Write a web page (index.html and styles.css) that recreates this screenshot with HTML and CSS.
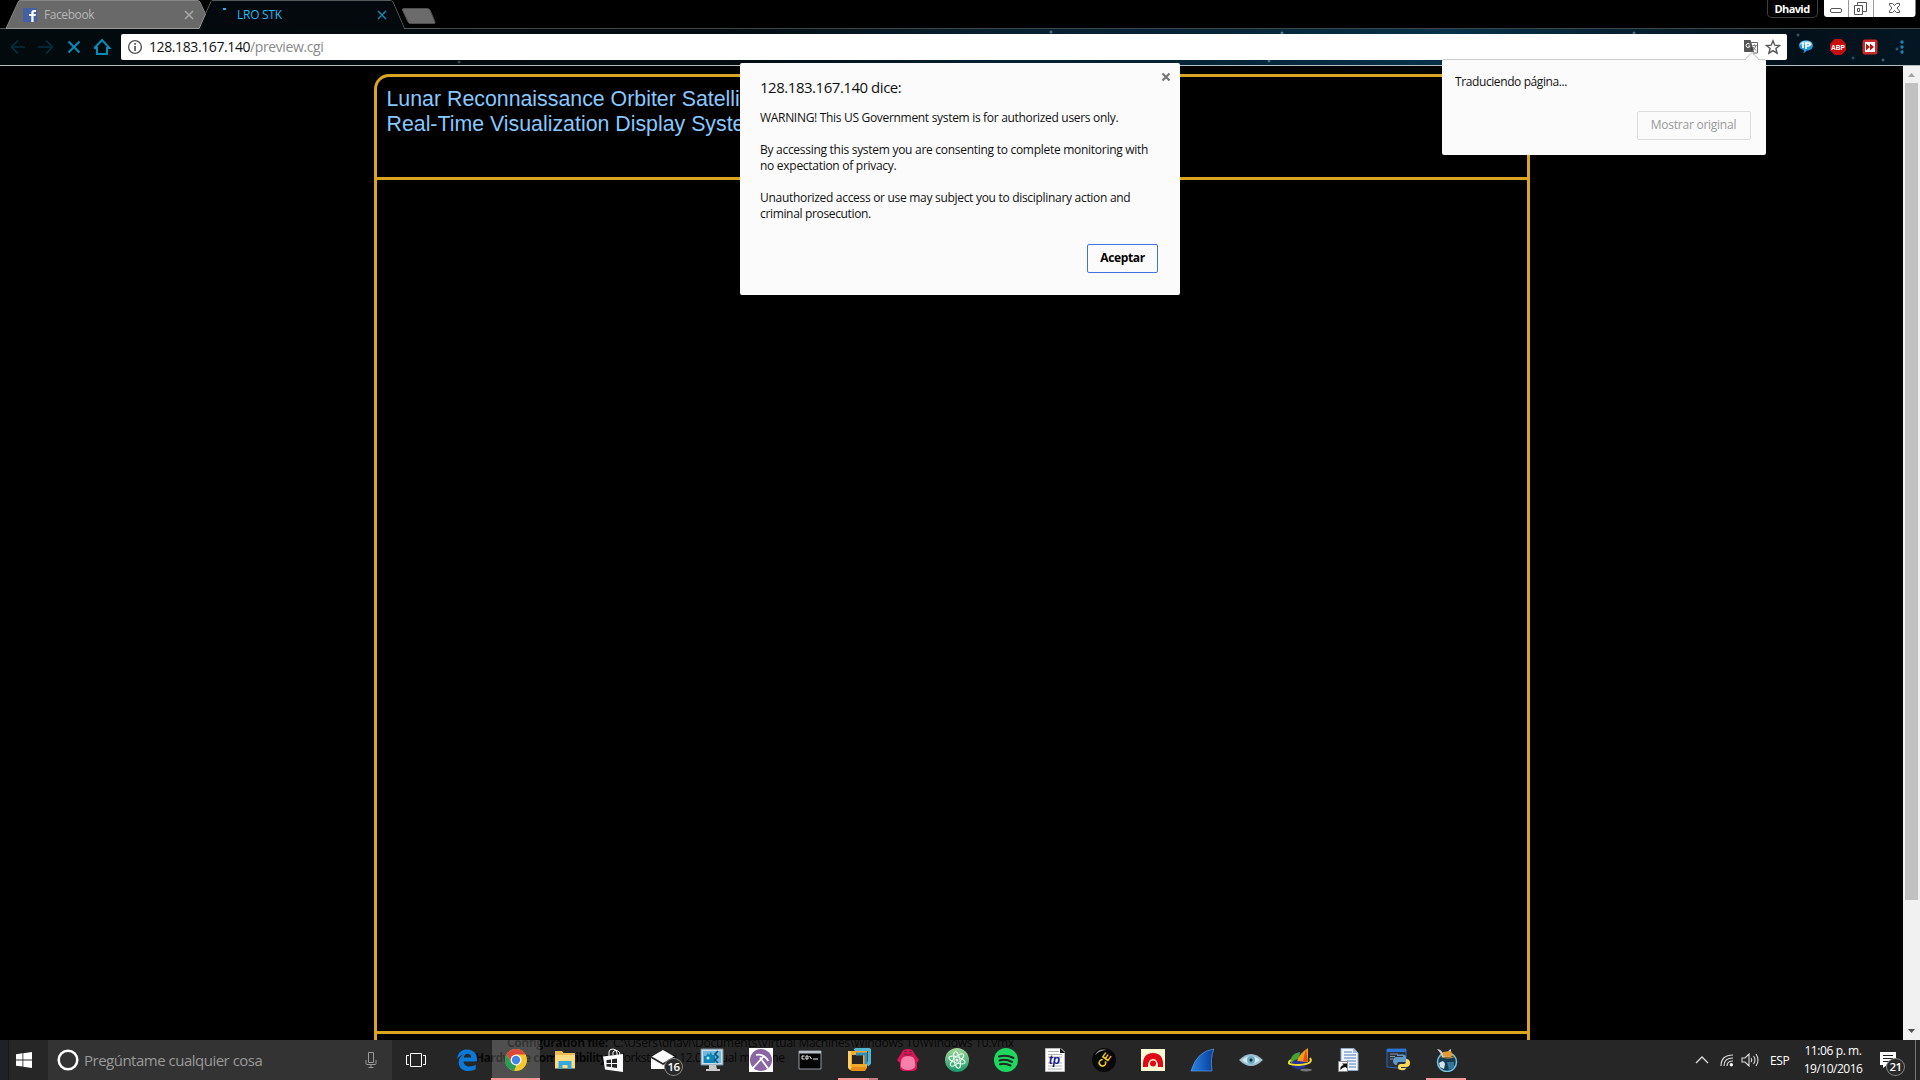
FILE: index.html
```html
<!DOCTYPE html>
<html lang="es">
<head>
<meta charset="utf-8">
<title>LRO STK</title>
<link rel="stylesheet" href="styles.css">
</head>
<body>
<div class="screen">
  <header class="tabstrip">
    <svg class="tabshapes" width="440" height="29" viewBox="0 0 440 29">
      <path d="M6 28.5 18.500 1.500Q19 .5 20 .5H197Q199 .5 200 2L205.500 14 199 28.500Z" fill="#696969"/>
      <path d="M6 28.500 18.500 1.500Q19 .5 20 .5H197Q199 .5 200 2L205.500 14" fill="none" stroke="#858585"/>
      <path d="M0 28.500H199L211 1.500Q211.500 .5 213 .5H390Q392 .5 393 2L404.500 28.500H440" fill="none" stroke="#555a5a"/>
      <path d="M6 28.500H199L205.500 14" fill="none" stroke="#999"/>
      <path d="M200 29 212 1.500 213 1H390.500L392 2 404 29Z" fill="#03090d"/>
      <path d="M403.500 8.500H427Q429 8.500 430 10L435 22Q435.500 23.500 434 23.500H410.500Q409 23.500 408 22L402.500 10Q402 8.500 403.500 8.500Z" fill="#6b6b6b" stroke="#505050"/>
    </svg>
    <div class="tab tab-facebook">
      <svg width="14" height="14" viewBox="0 0 14 14"><path fill="#4460a0" d="M0 0h14v14H0z"/><path d="M8.300 14V8H6V6h2.300V4.600Q8.300 2 11 2h2v2h-1.400q-1 0-1 1v1h2.300l-.3 2h-2v6" fill="#fff"/></svg>
      <span class="tab-name">Facebook</span>
      <svg class="tab-close" width="10" height="10" viewBox="0 0 10 10"><path d="m1 1 8 8M9 1 1 9"/></svg>
    </div>
    <div class="tab tab-active">
      <svg width="14" height="14" viewBox="0 0 14 14"><path fill="#1db4ee" d="M3 0h3v2H3z"/></svg>
      <span class="tab-name">LRO STK</span>
      <svg class="tab-close" width="10" height="10" viewBox="0 0 10 10"><path d="m1 1 8 8M9 1 1 9"/></svg>
    </div>
    <div class="profile">Dhavid</div>
    <svg class="winbuttons" width="92" height="17" viewBox="0 0 92 17">
      <path d="M0 0h91.500v14q0 3-3 3H3q-3 0-3-3z" fill="#fff"/><path d="M24.500 0v17M49.500 0v17" stroke="#999"/>
      <g fill="#fff" stroke="#555"><rect x="6.500" y="8.500" width="11" height="4" rx="1.500"/><path d="M33.500 2.500h9v9h-9z"/><path d="M30.500 5.500h8v9h-8z"/><path d="M33.500 8.500h2v3h-2z"/><path d="M65.500 3.500h3l2 2 2-2h3v2L73 8l2.500 3v1.500h-3l-2-2-2 2h-3V11L68 8l-2.500-3z"/></g>
    </svg>
  </header>

  <nav class="toolbar">
    <div class="navicons">
      <svg width="16" height="18" viewBox="0 0 16 18" class="dim"><path d="M15 9H2m6-6.500L1.500 9 8 15.500"/></svg>
      <svg width="16" height="18" viewBox="0 0 16 18" class="dim"><path d="M0 9h13M8 2.500 14.500 9 8 15.500"/></svg>
      <svg width="16" height="18" viewBox="0 0 16 18" class="lit"><path d="m2.500 3.500 11 11m0-11-11 11"/></svg>
      <svg width="18" height="18" viewBox="1 0 18 18" class="lit"><path d="M1.500 10 9 2l7.500 8H14v6H4v-6z"/></svg>
    </div>
    <div class="omnibox">
      <svg width="16" height="16" viewBox="0 0 16 16"><circle cx="8" cy="8" r="6.400" fill="none" stroke="#555" stroke-width="1.400"/><path d="M7.200 4h1.700v1.700H7.200zM7.200 7h1.700v5H7.200z" fill="#555"/></svg>
      <span class="url">128.183.167.140<span class="path">/preview.cgi</span></span>
      <svg class="translate" width="16" height="16" viewBox="0 0 16 16"><path d="M1 1h6.500l1 3L11 13H1.500Q1 13 1 12z" fill="#555"/><path d="M7 3.500h7.500v10.500H10" fill="none" stroke="#666"/><path d="M6.700 5.200Q5 3.700 3.700 5t0 3q1.500 1.200 3-.2V7H5.200" fill="none" stroke="#fff"/><path d="m8 7 2.500 2.500L8 12z" fill="#444"/><path d="M9.500 6.500h4m-2-1v1m1.500 0q-1 3-3 4.500m0-3 3 3.500" fill="none" stroke="#777"/></svg>
      <svg width="16" height="16" viewBox="0 0 16 16"><path d="m8 1.800 1.800 4.400 4.700.3-3.600 3 1.200 4.700L8 11.600l-4.100 2.600 1.200-4.700-3.600-3 4.700-.3z" fill="none" stroke="#555" stroke-width="1.400"/></svg>
    </div>
    <div class="extensions">
      <svg width="16" height="16" viewBox="0 0 16 16"><path d="M8 1.500c4 0 7 2 7 5s-3 5-6 5l-3.500 3 .5-3.500c-3-.4-5-2-5-4.500 0-3 3-5 7-5z" fill="#2499dc"/><path d="M8 1.800c3.500 0 6 1.500 6.500 4H1.500c.5-2.500 3-4 6.500-4z" fill="#84cdf3"/><path d="M5 3.500V9m3 1V4h2.500q1.500.2 1.500 1.500T10.500 7H8" stroke="#fff" stroke-width="1.700" fill="none"/></svg>
      <svg width="16" height="16" viewBox="0 0 16 16"><path d="M4.700 0h6.600L16 4.700v6.600L11.300 16H4.700L0 11.300V4.700z" fill="#c70d0d"/><text x="8" y="10.700" text-anchor="middle" class="abp">ABP</text></svg>
      <svg width="16" height="16" viewBox="0 0 16 16"><rect x=".5" y=".5" width="15" height="15" rx="2.500" fill="#c92a2a"/><path d="M3 3h10v10H3z" fill="#fff"/><path d="M4 4.500 8 8l-4 3.500zM8 4.500 12 8l-4 3.500z" fill="#a51818"/></svg>
      <svg width="16" height="16" viewBox="0 0 16 16" fill="#1687b5"><circle cx="8" cy="3" r="1.700"/><circle cx="8" cy="8" r="1.700"/><circle cx="8" cy="13" r="1.700"/></svg>
    </div>
  </nav>

  <main class="viewport">
    <section class="frame">
      <div class="banner">Lunar Reconnaissance Orbiter Satellite<br>Real-Time Visualization Display System</div>
      <div class="display"></div>
    </section>
    <div class="scrollbar">
      <svg width="17" height="17" viewBox="0 0 17 17"><path d="m8.500 7 3.500 4H5z" fill="#a3a3a3"/></svg>
      <div class="thumb"></div>
      <svg class="down" width="17" height="17" viewBox="0 0 17 17"><path d="M5 6h7l-3.500 4z" fill="#505050"/></svg>
    </div>
  </main>

  <footer class="taskbar">
    <div class="ghost">
      <div class="ghost-row"><b class="g1">Configuration file:</b><span class="g2">C:\Users\dhavi\Documents\Virtual Machines\Windows 10\Windows 10.vmx</span></div>
      <div class="ghost-row"><b class="g3">Hardware compatibility:</b><span class="g4">Workstation 12.0 virtual machine</span></div>
    </div>
    <div class="start"><svg width="16" height="16" viewBox="0 0 16 16" fill="#fff"><path d="M0 2.300 6.500 1.300V7.500H0zM7.300 1.200 16 0v7.500H7.300zM0 8.400h6.500v6.200L0 13.700zM7.300 8.400H16V16l-8.700-1.200z"/></svg></div>
    <div class="cortana">
      <svg width="24" height="24" viewBox="0 0 24 24"><circle cx="12" cy="12" r="9.300" fill="none" stroke="#fff" stroke-width="2.500"/></svg>
      <span class="ask">Pregúntame cualquier cosa</span>
      <svg width="12" height="18" viewBox="0 0 12 18" fill="none" stroke="#999"><path d="M3.500 1.500h5v10h-5zM1 9v3.500q0 1 1 1h8q1 0 1-1V9M6 13.500v3M3.500 16.500h5"/></svg>
    </div>
    <div class="taskview"><svg width="22" height="16" viewBox="0 0 22 16" fill="none" stroke="#fff"><path d="M5.500 1.500h11v13h-11zM4 3.500H1.500v9H4M18 3.500h2.500v9H18"/></svg></div>
    <div class="apps">
      <div class="app"><svg viewBox="0 0 24 24"><path d="M2 11C3 4 7 1.500 12 1.500c6.500 0 10 4.500 10 9v3H8.500c.3 3.500 3 5 6.200 5 2.300 0 4.300-.7 6-1.700v4.500c-2 1.100-4.500 1.700-7 1.700-6 0-10-3.500-10-8.600 0-3.500 1.800-6.400 5-8C5 7.500 3 9 2 11zm6.700-1.500h7.500c0-2.400-1.400-3.800-3.500-3.800s-3.500 1.400-4 3.800z" fill="#0b79d7"/></svg></div>
      <div class="app current"><svg viewBox="0 0 24 24"><circle cx="12" cy="12" r="11" fill="#f6c72d"/><path d="M2.500 6.500A11 11 0 0 1 21.500 6.500H12L7 14z" fill="#dc473c"/><path d="M2.500 6.500 7.500 15l5 2-2.500 6A11 11 0 0 1 2.500 6.500z" fill="#2a9c58"/><circle cx="12" cy="12" r="5.400" fill="#fff"/><circle cx="12" cy="12" r="4.200" fill="#4285e8"/></svg></div>
      <div class="app"><svg viewBox="0 0 24 24"><path d="M2 3h7l1.500 2H22v15H2z" fill="#e9bd50"/><path d="M2 7h20v13.500H2z" fill="#fbdc82"/><path d="M5.500 21v-8h13v8h-4v-4h-5v4z" fill="#35a9df"/></svg></div>
      <div class="app"><svg viewBox="0 0 24 24"><path d="M1 8.500 21 6v18L3 21.500z" fill="#fff"/><path d="M7 8V4q0-3 4-3 3.500 0 4 4v2M11 7V4q2-3 5-1 2 1 2 4" fill="none" stroke="#fff"/><path d="m4.500 12 4.500-.6V15H4.500zm5.500-.8 5-.6V15h-5zM4.500 16H9v3l-4.500-.5zm5.500 0h5v4l-5-.7z" fill="#252525"/></svg></div>
      <div class="app mail"><svg viewBox="0 0 24 24"><path d="m0 9 12-7 12 7v12H0z" fill="#fff"/><path d="m0 9 12 7 12-7" fill="none" stroke="#242424" stroke-width="1.700"/></svg><span class="badge">16</span></div>
      <div class="app"><svg viewBox="0 0 24 24"><path d="M1 1h22v16H1z" fill="#cbdde8" stroke="#778c98"/><path d="M3 3h18v12H3z" fill="#6fb9da"/><path d="M4 8h2l2-3 1 2 2-3 1 3h3v8H4z" fill="#0e83b8"/><circle cx="8" cy="10" r="1.500" fill="#bdeefa"/><path d="m18 3-3 3 3 3-3 3 3 3" stroke="#07507a" stroke-width="1.600" fill="none"/><path d="M9 17h7l1 4h3v2H6v-2h3z" fill="#c9c9c9"/></svg></div>
      <div class="app"><svg viewBox="0 0 24 24"><path d="M0 0h24v24H0z" fill="#fff"/><circle cx="12" cy="12" r="11" fill="#8b66a5"/><path d="m3.500 20.500 12-13M7 7q7-2 12.500 6M11 9.500l8 11" stroke="#fff" stroke-width="1.800" fill="none"/></svg></div>
      <div class="app"><svg viewBox="0 0 24 24"><path d="M1 3h22v18H1z" fill="#050505" stroke="#909aa5"/><path d="M1 3h22v2.500H1z" fill="#b8c1ca"/><path d="M6.500 8H4v3h2.500M8 8h2v3H8zM11.500 8l2 3M15 11h5" stroke="#eee" fill="none"/></svg></div>
      <div class="app running stacked"><svg viewBox="0 0 24 24"><path d="M8 3 10 1h11l2 2v11l-3 3" fill="none" stroke="#55b3d2" stroke-width="4"/><path d="M3 5h15v13H3z" fill="none" stroke="#f4a82c" stroke-width="4"/><path d="M1 3h3v15l2 4H3l-2-2z" fill="#ffce64"/><path d="m3 22 2-3h13l2 1-2 3H5z" fill="#e78e1b"/><path d="M9 6h10v10" fill="none" stroke="#398fb2" stroke-width="3"/><path d="M9 10h5v5H9z" fill="#252525"/></svg></div>
      <div class="app"><svg viewBox="0 0 24 24"><path d="M6 4q1-3 6-3 5 0 6 4l5 7-2 3v6l-3 2H7l-3-2v-6l-3-3z" fill="#d71557"/><path d="M5 14q0-6 7-6t7 6q2 8-7 8t-7-8z" fill="#f77fa9"/><path d="M8 3.500h3m2 0h3M8 6q4 2 8 0" stroke="#752040" fill="none"/></svg></div>
      <div class="app"><svg viewBox="0 0 24 24"><defs><linearGradient id="atom" x2="0" y2="1"><stop stop-color="#a6d799"/><stop offset="1" stop-color="#18986e"/></linearGradient></defs><circle cx="12" cy="12" r="12" fill="url(#atom)"/><g fill="none" stroke="#edfff3"><ellipse cx="12" cy="12" rx="3" ry="8.500" transform="rotate(-12 12 12)"/><ellipse cx="12" cy="12" rx="3" ry="8.500" transform="rotate(48 12 12)"/><ellipse cx="12" cy="12" rx="3" ry="8.500" transform="rotate(108 12 12)"/></g><circle cx="12" cy="12" r="1.500" fill="#fff"/></svg></div>
      <div class="app"><svg viewBox="0 0 24 24"><circle cx="12" cy="12" r="12" fill="#1ed760"/><path d="M5 8.500q7.500-2.200 14.500 1.500M5.500 12.500q6.500-1.800 12.500 1.500M6 16.200q5.500-1.200 10.500 1.300" stroke="#202820" stroke-width="2" stroke-linecap="round" fill="none"/></svg></div>
      <div class="app"><svg viewBox="0 0 24 24"><path d="M2.500 .5H18L21.500 4v19.500h-19z" fill="#fff" stroke="#bbb"/><path d="M5 3.500h11M5 6.500h14M5 9h14M5 15h14M5 18h14M5 21h14" stroke="#b0b0b0"/><path d="M17 0v5h5" fill="#111"/><text x="11.500" y="15.500" text-anchor="middle" class="tp">tp</text></svg></div>
      <div class="app"><svg viewBox="0 0 24 24"><circle cx="12" cy="12" r="12" fill="#080808"/><path d="M3 7Q7 0 15 2q-7 0-12 5z" fill="#aaa"/><text x="12" y="16" text-anchor="middle" class="ce" transform="rotate(-55 12 12)">CE</text></svg></div>
      <div class="app"><svg viewBox="0 0 24 24"><path d="M0 1h24v22H0z" fill="#fff9d4"/><path d="M2 19q-1-14 10-14t10 14h-5q0-8-5-8t-5 8z" fill="#df0814"/><circle cx="12" cy="15.500" r="3" fill="#df0814"/></svg></div>
      <div class="app"><svg viewBox="0 0 24 24"><defs><linearGradient id="fin" x2="1"><stop stop-color="#2b83df"/><stop offset="1" stop-color="#073c9c"/></linearGradient></defs><path d="M1 23Q7 3 24 1q-4 8-2 22z" fill="url(#fin)" stroke="#5aa0e5" stroke-width=".7"/></svg></div>
      <div class="app"><svg viewBox="0 0 24 24"><path d="M0 12q6-6 12-6t12 6q-6 6-12 6T0 12z" fill="#9cbfcf"/><path d="M3 12q5-4 9-4t9 4q-5 4-9 4t-9-4z" fill="#d4eaf2"/><circle cx="12" cy="12" r="4" fill="#6eabc2"/><circle cx="12" cy="12" r="1.500" fill="#122733"/></svg></div>
      <div class="app"><svg viewBox="0 0 24 24"><ellipse cx="18" cy="22" rx="6" ry="1.500" fill="#777"/><circle cx="11" cy="13" r="8.500" fill="#24329a"/><path d="M3 16Q1 6 12 4l-1 7q-5 0-8 5z" fill="#46a52c"/><path d="M3 12q-7 5 8 5 15-1 11-7" stroke="#f5df25" stroke-width="2" fill="none"/><path d="M9 13Q12 5 20 0v14z" fill="#f79c16"/><path d="m18 1 2 13-5-1z" fill="#e94b17"/></svg></div>
      <div class="app"><svg viewBox="0 0 24 24"><path d="M4 .5h13L21 5v17.500H4z" fill="#eff5ff" stroke="#91a7c7"/><path d="M16 0v5h5" fill="#9ebee5"/><path d="M7 4h8M7 7h12M7 10h12M10 13h9M12 16h7M12 19h7" stroke="#537bb6"/><path d="M1.500 13.500h9v10h-9z" fill="#fff" stroke="#888"/><path d="M3.500 22q-1-4 3-5l-1.500-1.500H10v5l-1.500-1.500Q6 19 3.500 22z" fill="#111"/></svg></div>
      <div class="app"><svg viewBox="0 0 24 24"><path d="M1 1h19v20L1 19z" fill="#28313a" stroke="#2b66b5"/><path d="M1 1h19v3H1z" fill="#2e73d6"/><path d="M4 6h8M4 8.500h5M4 11h3" stroke="#8b98a5"/><path d="M11 6.500h6q3 0 3 3V14h-7q-2 0-2 3-4 0-4-4t4-4h6V8h-6z" fill="#6098c7"/><path d="M20 11q4 0 4 4t-4 4h-5v1h5q-1 3-5 2-3 0-3-3 0-3 3-3h3q2 0 2-2z" fill="#ffdb55"/></svg></div>
      <div class="app running"><svg viewBox="0 0 24 24"><circle cx="12" cy="14" r="9.500" fill="#173b53" stroke="#78c6e8" stroke-width="1.500"/><path d="M2 1q5 0 7 7l3-1q1-5 4-6v8H7Q6 5 2 1z" fill="#cbd1d3"/><path d="m8 4 8-1 2 5q-5 2-10 0zM3 8q9 3 18 0-7 5-18 0z" fill="#e39a31"/><path d="M4 15q5-4 6 1l-1 5-4-2z" fill="#d8e3e9"/><path d="M12 14h7v6l-5 2z" fill="#347593"/></svg></div>
    </div>
    <div class="tray">
      <svg class="t-up" width="14" height="10" viewBox="0 0 14 10"><path d="m1 8 6-6 6 6" fill="none" stroke="#ddd" stroke-width="1.300"/></svg>
      <svg class="t-net" width="14" height="14" viewBox="0 0 14 14"><g fill="none" stroke="#ddd"><path d="M1 13Q1 2 13 2M4 13q0-8 9-8M7 13q0-5 6-5" stroke-width="1.200"/></g><circle cx="11.300" cy="11.700" r="1.700" fill="#fff"/></svg>
      <svg class="t-vol" width="18" height="14" viewBox="0 0 18 14"><path d="M1 5h3l4-4v12L4 9H1zM10 5q1.500 2 0 4M12.500 3q3 4 0 8M15 1q4 6 0 12" fill="none" stroke="#ddd" stroke-width="1.100"/></svg>
      <span class="lang">ESP</span>
      <div class="clock"><span class="time">11:06 p. m.</span><span class="date">19/10/2016</span></div>
      <div class="notes"><svg width="18" height="18" viewBox="0 0 18 18"><path d="M1 1h16v13H8l-4 3v-3H1z" fill="#fff"/><path d="M4 4.500h10M4 7.500h10M4 10.500h7" stroke="#222"/></svg><span class="badge">21</span></div>
    </div>
  </footer>

  <div class="dialog" role="dialog">
    <div class="dialog-title">128.183.167.140 dice:</div>
    <p class="m1">WARNING! This US Government system is for authorized users only.</p>
    <p><span class="m2">By accessing this system you are consenting to complete monitoring with</span><br><span class="m3">no expectation of privacy.</span></p>
    <p><span class="m4">Unauthorized access or use may subject you to disciplinary action and</span><br><span class="m5">criminal prosecution.</span></p>
    <button class="accept">Aceptar</button>
    <svg class="dialog-close" width="10" height="10" viewBox="0 0 10 10"><path d="m1.500 1.500 7 7m0-7-7 7" stroke="#777" stroke-width="2.200"/></svg>
  </div>

  <div class="popup">
    <svg class="popup-arrow" width="14" height="8" viewBox="0 0 14 8"><path d="m1 7 6-6 6 6v1H1z" fill="#fbfbfb"/><path d="m0 7.500 7-7 7 7" fill="none" stroke="#bbb"/></svg>
    <div class="popup-text">Traduciendo página...</div>
    <button class="original">Mostrar original</button>
  </div>
</div>
</body>
</html>
```
FILE: styles.css
```css
* { box-sizing: border-box; }
html, body { margin: 0; background: #000; overflow: hidden; }
body { font-family: "Open Sans", "Noto Sans", sans-serif; font-size: 12px; color: #111; }
button { font-family: inherit; padding: 0; }
p { margin: 0; }
svg { display: block; flex: none; }
span, b { white-space: nowrap; }
.screen { position: relative; width: 1920px; height: 1080px; display: flex; flex-direction: column; }

.tabstrip { position: relative; height: 29px; display: flex; align-items: flex-start; border-bottom: 1px solid #404545; background: #000; }
.tabshapes { position: absolute; left: 0; top: 0; }
.tab { position: relative; display: flex; align-items: center; height: 29px; }
.tab-facebook { width: 197px; padding-left: 23px; color: #b5b5b5; }
.tab-active { width: 193px; padding-left: 23px; color: #20bcf2; }
.tab-name { margin-left: 7px; flex: 1; line-height: 16px; letter-spacing: -.42px; }
.tab-active .tab-name { margin-left: 3px; letter-spacing: -.25px; }
.tab-close { margin-right: 3px; fill: none; stroke: #aaa; stroke-width: 1.5; }
.tab-active .tab-close { stroke: #1687ad; }
.profile { margin-left: auto; width: 51px; height: 18px; border: 1px solid #404040; border-top: 0; border-radius: 0 0 5px 5px; color: #fff; font-size: 11px; font-weight: 700; line-height: 17px; text-align: center; letter-spacing: -.6px; padding-right: 1px; }
.winbuttons { margin: 0 4px 0 6px; }

.toolbar { height: 37px; display: flex; align-items: flex-start; padding-top: 5px; border-bottom: 1px solid #b5bcbc;
  background:
    radial-gradient(circle at 1634px 4px, #75899b 0, transparent 2px),
    radial-gradient(circle at 1798px 6px, #52718a 0, transparent 2px),
    radial-gradient(circle at 1853px 29px, #46657c 0, transparent 2px),
    radial-gradient(circle at 1883px 31px, #65808f 0, transparent 2px),
    radial-gradient(circle at 1897px 20px, #58758a 0, transparent 2px),
    radial-gradient(circle at 1051px 3px, #7699aa 0, transparent 2px),
    radial-gradient(circle at 1282px 4px, #80a8bd 0, transparent 2px),
    radial-gradient(circle at 1269px 32px, #6595b0 0, transparent 2px),
    radial-gradient(circle at 459px 33px, #50616c 0, transparent 2px),
    linear-gradient(90deg, #030a0d 0, #020b10 720px, #06202f 980px, #052538 1230px, #063149 1450px, #051f2e 1650px, #031019 1800px, #031723 1920px); }
.navicons { display: flex; gap: 12px; width: 121px; padding: 4px 0 0 10px; }
.navicons svg { fill: none; stroke-width: 1.7; }
.navicons .dim { stroke: #05303f; }
.navicons .lit { stroke: #078cb9; stroke-width: 2; }
.omnibox { width: 1666px; height: 26px; background: #fff; border-radius: 2px; display: flex; align-items: center; padding: 0 6px; }
.url { flex: 1; margin-left: 6px; font-size: 14px; line-height: 20px; letter-spacing: -.4px; }
.path { color: #888; }
.translate { margin-right: 6px; }
.extensions { display: flex; gap: 16px; padding: 5px 0 0 11px; }
.abp { font: 700 6.6px "Liberation Sans", sans-serif; fill: #fff; }

.viewport { height: 974px; display: flex; justify-content: space-between; background: #000; }
.frame { margin: 8px 0 0 374px; width: 1156px; border: 3px solid #daa520; border-bottom: 0; border-radius: 15px 15px 0 0; }
.banner { height: 103px; border-bottom: 3px solid #daa520; padding: 10px 0 0 9.5px; color: #87c8ff; font: 21.33px/25px "Liberation Sans", Arial, sans-serif; }
.display { height: 854px; border-bottom: 3px solid #daa520; }
.scrollbar { width: 17px; background: #f1f1f1; display: flex; flex-direction: column; }
.thumb { height: 817px; margin: 0 2px; background: #c1c1c1; }
.down { margin-top: auto; }

.taskbar { position: relative; height: 40px; display: flex; background: #262626; color: #fff; overflow: hidden; }
.taskbar > * { position: relative; }
.taskbar > .ghost { position: absolute; left: 475px; top: -6px; width: 600px; color: #060606; font-size: 12px; }
.ghost-row { position: relative; height: 15px; line-height: 18px; display: flex; }
.g1 { margin-left: 32px; width: 106px; letter-spacing: -.4px; }
.g2 { letter-spacing: -.27px; }
.g3 { width: 138px; letter-spacing: -.5px; }
.g4 { letter-spacing: -.4px; }
.start { width: 48px; border-left: 8px solid #202127; box-shadow: inset 1px 0 #151515; padding: 12px 0 0 8px; }
.cortana { width: 344px; background: #333; display: flex; align-items: center; padding: 0 15px 0 8px; }
.ask { flex: 1; margin-left: 4px; color: #999; font-size: 15px; line-height: 24px; letter-spacing: -.5px; }
.taskview { width: 50px; display: flex; align-items: center; padding-left: 13px; }
.apps { display: flex; }
.app { position: relative; width: 49px; height: 40px; display: flex; align-items: center; justify-content: center; }
.app svg { width: 24px; height: 24px; }
.current { background: linear-gradient(90deg, transparent 1px, rgba(255, 255, 255, .19) 1px); border-bottom: 2px solid #ff979b; }
.current svg { margin-top: 2px; }
.running::after { content: ""; position: absolute; left: 4px; bottom: 0; width: 40px; height: 2px; background: #ff979b; }
.stacked::after { background: linear-gradient(90deg, #ff979b 31px, #c37a7e 31px); }
.badge { position: absolute; left: 26px; top: 18px; width: 19px; height: 18px; border: 1px solid #888; border-radius: 50%; background: #292929; color: #fff; font-size: 11.5px; font-weight: 600; line-height: 16px; text-align: center; letter-spacing: -.5px; }
.tp { font: italic 700 12px "Liberation Sans", sans-serif; fill: #202088; }
.ce { font: 700 11px "Liberation Sans", sans-serif; fill: #f2cd21; }
.tray { margin-left: auto; display: flex; align-items: center; border-right: 1px solid #777; margin-right: 4px; }
.t-up { margin-right: -1px; }
.t-net { margin-left: 12px; }
.t-vol { margin-left: 7px; }
.lang { margin-left: 11px; width: 34px; font-size: 12px; letter-spacing: -.4px; }
.clock { width: 58px; display: flex; flex-direction: column; align-items: center; font-size: 12px; line-height: 18px; }
.time { letter-spacing: -.4px; }
.date { letter-spacing: -.5px; }
.notes { position: relative; width: 53px; padding-left: 17px; }
.notes .badge { left: 24px; top: 7px; }

.dialog { position: absolute; left: 740px; top: 63px; width: 440px; height: 232px; padding: 14px 20px; background: #fbfbfb; border-radius: 2px; font-size: 12px; line-height: 16px; }
.dialog-title { font-size: 15px; line-height: 20px; margin-bottom: 13px; letter-spacing: -.47px; }
.dialog p { margin-bottom: 16px; }
.m1 { letter-spacing: -.31px; }
.m2 { letter-spacing: -.28px; }
.m3 { letter-spacing: -.28px; }
.m4 { letter-spacing: -.3px; }
.m5 { letter-spacing: -.34px; }
.accept { position: absolute; left: 347px; top: 181px; width: 71px; height: 29px; background: #fbfbfb; border: 1px solid #4272db; border-radius: 2px; font-size: 12px; font-weight: 700; letter-spacing: -.35px; padding-bottom: 2px; }
.dialog-close { position: absolute; left: 421px; top: 9px; }
.popup { position: absolute; left: 1442px; top: 59px; width: 324px; height: 96px; padding: 14px 13px; background: #fbfbfb; border-top: 1px solid #ccc; border-radius: 2px; line-height: 16px; }
.popup-text { letter-spacing: -.4px; }
.popup-arrow { position: absolute; left: 303px; top: -8px; }
.original { position: absolute; left: 195px; top: 51px; width: 114px; height: 29px; background: #fbfbfb; border: 1px solid #ddd; border-radius: 2px; font-size: 12px; color: #999; letter-spacing: -.25px; padding: 0 1px 2px 0; }
```
